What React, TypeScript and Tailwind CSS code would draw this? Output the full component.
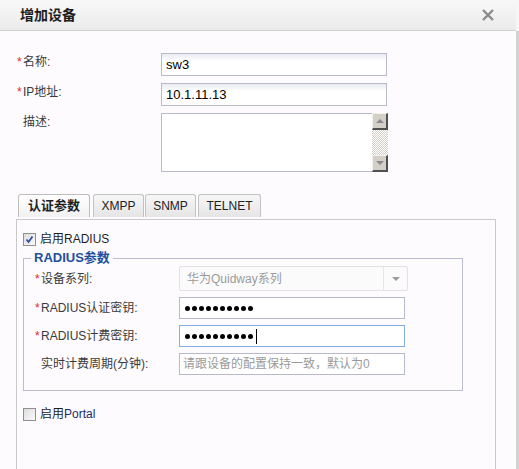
import React from "react";

const Star = () => <span className="inline-block w-[6px] text-[#e3262a]">*</span>;

function Dots({ cursor }: { cursor?: boolean }) {
  return (
    <div className="flex items-center gap-[2px] pl-[5px]">
      {Array.from({ length: 10 }).map((_, i) => (
        <span key={i} className="block h-[5px] w-[5px] rounded-full bg-black" />
      ))}
      {cursor && <span className="ml-[1px] block h-[15px] w-px bg-black" />}
    </div>
  );
}

function Check({ checked }: { checked?: boolean }) {
  return (
    <span className="relative block h-[13px] w-[13px] border border-[#8e8f8f] bg-linear-to-br from-[#dcdcdc] to-[#fbfbfb]">
      {checked && (
        <svg viewBox="0 0 11 11" className="absolute left-0 top-0 h-[11px] w-[11px]">
          <path d="M2.5 5.5 L4.5 8 L8.5 2.5" fill="none" stroke="#2f4fa6" strokeWidth="1.8" />
        </svg>
      )}
    </span>
  );
}

function ScrollBtn({ up }: { up?: boolean }) {
  return (
    <div className="flex h-[17px] w-[16px] items-center justify-center border-t border-l border-t-[#f4f2ee] border-l-[#f4f2ee] border-b-2 border-r-2 border-b-[#505050] border-r-[#505050] bg-[#d4d0c8]">
      <svg viewBox="0 0 8 4" className="h-[4px] w-[8px]">
        <path d={up ? "M0 4 L4 0 L8 4 Z" : "M0 0 L4 4 L8 0 Z"} fill="#8a8a8a" />
      </svg>
    </div>
  );
}

const inputCls =
  "flex items-center border border-[#b9b9cc] bg-linear-to-b from-[#e9ebf2] to-white to-[35%] px-[4px] text-[13px] text-black";

export default function App() {
  return (
    <div className="flex h-[469px] w-[519px] overflow-hidden bg-[#fdfbfd] font-['Liberation_Sans','Noto_Sans_CJK_SC',sans-serif] text-[12px] text-[#3a3a3a]">
      <div className="flex w-[516px] flex-col">
        {/* title bar */}
        <div className="flex h-[31px] shrink-0 items-center justify-between border-b border-[#d2d2d2] bg-linear-to-b from-[#f8f8f8] to-[#ebebeb] pl-[20px] pr-[22px]">
          <span className="text-[14px] font-bold text-[#1c1c1c]">增加设备</span>
          <svg viewBox="0 0 12 12" className="h-[12px] w-[12px]">
            <path d="M1 1 L11 11 M11 1 L1 11" stroke="#8a8a8a" strokeWidth="2.4" />
          </svg>
        </div>

        {/* basic fields */}
        <div className="mt-[22px] flex flex-col gap-[7px] pl-[17px]">
          <div className="flex">
            <div className="w-[144px] pt-[1px] leading-[16px]"><Star />名称:</div>
            <div className={`${inputCls} h-[23px] w-[226px]`}>sw3</div>
          </div>
          <div className="flex">
            <div className="w-[144px] pt-[1px] leading-[16px]"><Star />IP地址:</div>
            <div className={`${inputCls} h-[23px] w-[226px]`}>10.1.11.13</div>
          </div>
          <div className="flex">
            <div className="w-[144px] pt-[1px] pl-[6px] leading-[16px]">描述:</div>
            <div className="flex h-[59px] w-[227px] border border-[#b9b9cc] bg-white">
              <div className="flex-1" />
              <div className="-mr-px -my-px flex w-[16px] flex-col">
                <ScrollBtn up />
                <div className="flex-1 bg-[repeating-conic-gradient(#d4d0c8_0_25%,#ffffff_0_50%)] bg-[length:2px_2px]" />
                <ScrollBtn />
              </div>
            </div>
          </div>
        </div>

        {/* tabs */}
        <div className="mt-[22px] flex pl-[18px] text-[12px] text-[#222]">
          <div className="flex h-[23px] w-[72px] items-center justify-center rounded-t-[3px] border border-b-0 border-[#bcbcbc] bg-linear-to-b from-white to-[#f1f1f1] text-[13px] font-bold text-[#1e1e1e]">
            认证参数
          </div>
          <div className="ml-[3px] flex h-[23px] w-[51px] items-center justify-center rounded-t-[3px] border border-b-0 border-[#c2c2c2] bg-linear-to-b from-[#f7f7f7] to-[#e5e5e5]">
            XMPP
          </div>
          <div className="ml-[1px] flex h-[23px] w-[51px] items-center justify-center rounded-t-[3px] border border-b-0 border-[#c2c2c2] bg-linear-to-b from-[#f7f7f7] to-[#e5e5e5]">
            SNMP
          </div>
          <div className="ml-[2px] flex h-[23px] w-[63px] items-center justify-center rounded-t-[3px] border border-b-0 border-[#c2c2c2] bg-linear-to-b from-[#f7f7f7] to-[#e5e5e5]">
            TELNET
          </div>
        </div>

        {/* tab panel */}
        <div className="ml-[16px] mt-[2px] w-[480px] flex-1 border border-b-0 border-[#c9c9c9] pl-[6px] pt-[12px]">
          <div className="flex h-[14px] items-center gap-[4px] text-[#1e1e1e]">
            <Check checked />
            <span>启用RADIUS</span>
          </div>

          <fieldset className="mt-[4px] w-[440px] border border-[#bdbdd0] pb-[15px]">
            <legend className="ml-[7px] px-[3px] text-[13px] font-bold leading-[16px] text-[#1f4f9f]">RADIUS参数</legend>
            <div className="flex flex-col gap-[6px] pl-[11px]">
              <div className="flex items-center">
                <div className="w-[144px]"><Star />设备系列:</div>
                <div className="flex h-[25px] w-[229px] items-center rounded-[2px] border border-[#e2e2e2] bg-[#fbfbfb] text-[#9a9a9a]">
                  <span className="flex-1 pl-[7px]">华为Quidway系列</span>
                  <span className="flex h-full w-[24px] items-center justify-center border-l border-[#e6e6e6]">
                    <svg viewBox="0 0 8 4" className="h-[4px] w-[8px]">
                      <path d="M0 0 L8 0 L4 4 Z" fill="#9c9c9c" />
                    </svg>
                  </span>
                </div>
              </div>
              <div className="flex items-center">
                <div className="w-[144px]"><Star />RADIUS认证密钥:</div>
                <div className="flex h-[22px] w-[226px] items-center border border-[#b9b9cc] bg-white">
                  <Dots />
                </div>
              </div>
              <div className="flex items-center">
                <div className="w-[144px]"><Star />RADIUS计费密钥:</div>
                <div className="flex h-[22px] w-[226px] items-center border border-[#80b0e2] bg-white">
                  <Dots cursor />
                </div>
              </div>
              <div className="flex items-center">
                <div className="w-[144px] pl-[6px]">实时计费周期(分钟):</div>
                <div className="flex h-[22px] w-[226px] items-center border border-[#b9b9cc] bg-white pl-[3px] text-[#9a9a9a]">
                  请跟设备的配置保持一致，默认为0
                </div>
              </div>
            </div>
          </fieldset>

          <div className="mt-[16px] flex h-[14px] items-center gap-[4px] text-[#1e1e1e]">
            <Check />
            <span>
              启用<span className="text-[#1d2a6a]">Portal</span>
            </span>
          </div>
        </div>
      </div>
      <div className="flex w-[3px] flex-col">
        <div className="h-[31px] bg-[#f6f6f6]" />
        <div className="flex-1 bg-[#d2d2d2]" />
      </div>
    </div>
  );
}
